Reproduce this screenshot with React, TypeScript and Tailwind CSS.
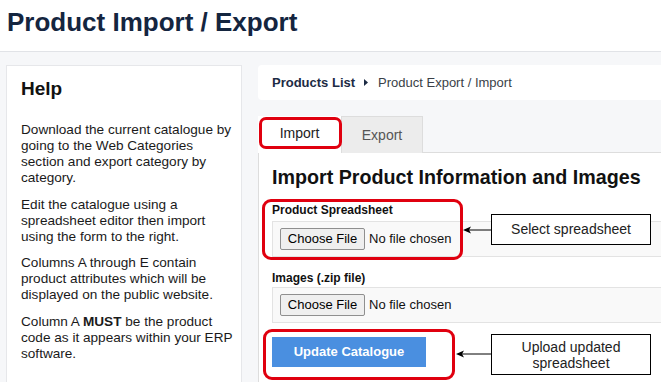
import React from "react";

function LeftArrow({ width }: { width: number }) {
  return (
    <svg width={width} height={10} viewBox={`0 0 ${width} 10`} className="block">
      <line x1={6} y1={5} x2={width} y2={5} stroke="#000" strokeWidth={1} />
      <polygon points="0,5 8,1.5 6,5 8,8.5" fill="#000" />
    </svg>
  );
}

function FileField() {
  return (
    <div className="h-[36px] border border-r-0 border-[#e3e3e3] bg-[#f9f9f9] pl-[7px] flex items-center">
      <div className="h-[22px] w-[85px] rounded-[2px] border border-[#8f8f8f] bg-[#efefef] flex items-center justify-center text-[13px] text-black">
        Choose File
      </div>
      <span className="ml-[4px] text-[13px] text-[#111]">No file chosen</span>
    </div>
  );
}

export default function App() {
  return (
    <div className="w-[661px] h-[382px] overflow-hidden bg-[#f6f7f9] font-['Liberation_Sans',Arial,sans-serif]">
      <header className="h-[52px] bg-white border-b border-[#e1e3e7] pl-[7px] pt-[7px]">
        <h1 className="text-[26px] leading-[30px] font-bold text-[#14253f] whitespace-nowrap">
          Product Import / Export
        </h1>
      </header>

      <div className="flex pl-[6px] pt-[13px] gap-[16px]">
        <aside className="w-[236px] h-[400px] shrink-0 bg-white border border-[#e6e7ea] pl-[14px] pt-[12px] text-[#1a1a1a]">
          <h2 className="text-[19px] leading-[22px] font-bold text-[#111] mb-[22px]">Help</h2>
          <div className="text-[13.6px] leading-[16px] whitespace-nowrap">
            <p className="mb-[10.5px]">
              Download the current catalogue by
              <br />
              going to the Web Categories
              <br />
              section and export category by
              <br />
              category.
            </p>
            <p className="mb-[10.5px]">
              Edit the catalogue using a
              <br />
              spreadsheet editor then import
              <br />
              using the form to the right.
            </p>
            <p className="mb-[10.5px]">
              Columns A through E contain
              <br />
              product attributes which will be
              <br />
              displayed on the public website.
            </p>
            <p>
              Column A <b>MUST</b> be the product
              <br />
              code as it appears within your ERP
              <br />
              software.
            </p>
          </div>
        </aside>

        <main className="flex-1 min-w-0">
          <div className="h-[35px] bg-white rounded-l-[4px] flex items-center pl-[14px] text-[13px] whitespace-nowrap">
            <span className="font-bold text-[#1c2b44]">Products List</span>
            <svg width="4" height="7" viewBox="0 0 4 7" className="ml-[9px] mr-[10px]">
              <polygon points="0,0 4,3.5 0,7" fill="#1c2b44" />
            </svg>
            <span className="text-[#3a3f47]">Product Export / Import</span>
          </div>

          <div className="relative mt-[16px] flex h-[37px]">
            <div className="w-[83px] bg-white flex items-center justify-center text-[14px] text-[#222] pb-[3px]">
              Import
            </div>
            <div className="w-[82px] bg-[#ececec] border border-b-0 border-[#dddddd] flex items-center justify-center text-[14px] text-[#555]">
              Export
            </div>
            <div className="flex-1 border-b border-[#dddddd]" />
            <div className="absolute left-[1px] top-[1px] w-[83px] h-[32px] rounded-[7px] border-[3px] border-[#e0000f]" />
          </div>

          <div className="relative h-[240px] bg-white border-l border-[#dddddd] pl-[13px] pt-[12px]">
            <h3 className="text-[19.7px] leading-[24px] font-bold text-[#111] whitespace-nowrap">
              Import Product Information and Images
            </h3>

            <div className="mt-[13px] text-[12px] leading-[16px] font-bold text-[#111]">Product Spreadsheet</div>
            <div className="mt-[3px]">
              <FileField />
            </div>

            <div className="mt-[13px] text-[12px] leading-[16px] font-bold text-[#111]">Images (.zip file)</div>
            <div className="mt-[1px]">
              <FileField />
            </div>

            <button className="mt-[14px] w-[154px] h-[30px] bg-[#4a8fe0] text-white text-[13px] font-bold">
              Update Catalogue
            </button>

            {/* highlight overlays */}
            <div className="absolute left-[3px] top-[46px] w-[201px] h-[61px] rounded-[9px] border-[3px] border-[#e0000f]" />
            <div className="absolute left-[4px] top-[176px] w-[192px] h-[51px] rounded-[9px] border-[3px] border-[#e0000f]" />

            {/* callouts */}
            <div className="absolute left-[204px] top-[72px]">
              <LeftArrow width={28} />
            </div>
            <div className="absolute left-[232px] top-[61px] w-[160px] h-[31px] border border-black bg-white flex items-center justify-center text-[14px] text-[#222]">
              Select spreadsheet
            </div>

            <div className="absolute left-[197px] top-[196px]">
              <LeftArrow width={35} />
            </div>
            <div className="absolute left-[232px] top-[181px] w-[160px] h-[41px] border border-black bg-white flex items-center justify-center text-center text-[14px] leading-[16px] text-[#222]">
              Upload updated
              <br />
              spreadsheet
            </div>
          </div>
        </main>
      </div>
    </div>
  );
}
